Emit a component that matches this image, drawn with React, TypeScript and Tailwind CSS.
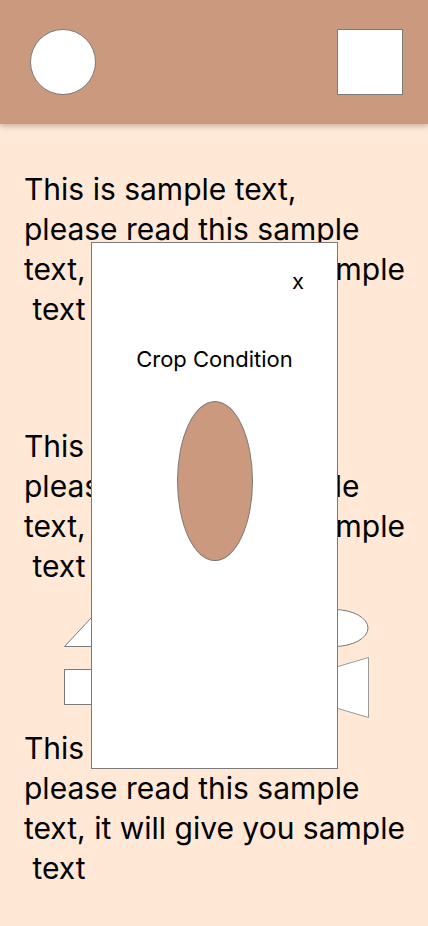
import React from "react";

const font = { fontFamily: "Inter, 'Noto Sans', sans-serif" };

function Para() {
  return (
    <div className="text-[30px] leading-[40px] text-black whitespace-pre" style={font}>
      <div>This is sample text,</div>
      <div>please read this sample</div>
      <div>text, it will give you sample</div>
      <div> text</div>
    </div>
  );
}

export default function App() {
  return (
    <div className="relative w-[428px] h-[926px] bg-[#ffe8d6] overflow-hidden" style={font}>
      <header className="h-[124px] bg-[#cb997e] shadow-[0_2px_6px_rgba(0,0,0,0.25)] flex items-center justify-between px-[30px] relative z-10">
        <div className="w-[66px] h-[66px] rounded-full bg-white border border-[#7a7a7a]" />
        <div className="w-[66px] h-[66px] bg-white border border-[#7a7a7a] mr-[-5px]" />
      </header>
      <main className="pl-[24px] pt-[45px]">
        <Para />
        <div className="mt-[97px]">
          <Para />
        </div>
        <div className="mt-[23px] flex justify-between pl-[40px] pr-[58px]">
          <div className="flex flex-col gap-[22px]">
            <svg width="72" height="38" viewBox="0 0 72 38">
              <polygon points="0.5,37.5 35,0.5 70,37.5" fill="white" stroke="#7a7a7a" strokeWidth="1" />
            </svg>
            <div className="w-[70px] h-[36px] bg-white border border-[#7a7a7a]" />
          </div>
          <div className="flex flex-col gap-[10px]">
            <svg width="72" height="38" viewBox="0 0 72 38">
              <ellipse cx="36" cy="19" rx="34" ry="18.5" fill="white" stroke="#7a7a7a" strokeWidth="1" />
            </svg>
            <svg width="72" height="62" viewBox="0 0 72 62">
              <polygon points="1,21 70.5,0.5 70.5,60.5 1,40" fill="white" stroke="#9a9a9a" strokeWidth="1" />
            </svg>
          </div>
        </div>
        <div className="mt-[9px]">
          <Para />
        </div>
      </main>
      <div className="absolute left-[91px] top-[242px] w-[247px] h-[527px] bg-white border border-[#7a7a7a] z-20 flex flex-col items-center">
        <div className="self-end mr-[33px] mt-[26px] text-[22px] leading-[24px] text-black">x</div>
        <div className="mt-[52px] text-[22px] leading-[28px] text-black">Crop Condition</div>
        <div className="mt-[28px] w-[76px] h-[160px] rounded-[50%] bg-[#cb997e] border border-[#7a7a7a]" />
      </div>
    </div>
  );
}
